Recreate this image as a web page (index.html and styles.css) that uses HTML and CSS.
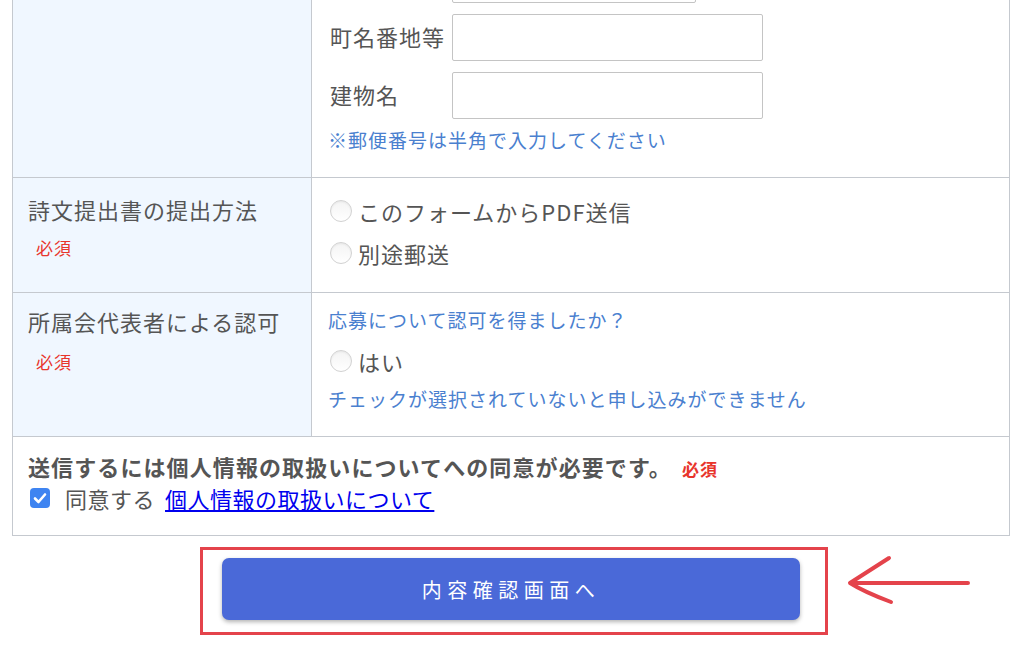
FILE: index.html
```html
<!DOCTYPE html>
<html lang="ja">
<head>
    <meta charset="UTF-8">
    <meta name="viewport" content="width=device-width, initial-scale=1.0">
    <title>応募フォーム</title>
    <link rel="stylesheet" href="styles.css">
</head>
<body>

<div class="page">
    <table class="form-table">
        <colgroup>
            <col class="col-label">
            <col>
        </colgroup>
        <tr>
            <th>
                <div class="label">住所</div>
                <span class="req">必須</span>
            </th>
            <td class="address">
                <div class="addr-row"><span class="addr-label">郵便番号</span><input type="text" class="input short"></div>
                <div class="addr-row"><span class="addr-label">都道府県</span><input type="text" class="input short"></div>
                <div class="addr-row"><span class="addr-label">市区町村</span><input type="text" class="input short"></div>
                <div class="addr-row"><span class="addr-label">町名番地等</span><input type="text" class="input"></div>
                <div class="addr-row"><span class="addr-label">建物名</span><input type="text" class="input"></div>
                <p class="note">※郵便番号は半角で入力してください</p>
            </td>
        </tr>
        <tr>
            <th>
                <div class="label">詩文提出書の提出方法</div>
                <span class="req">必須</span>
            </th>
            <td class="choices">
                <label class="radio-line"><input type="radio" name="method" class="radio">このフォームからPDF送信</label>
                <label class="radio-line"><input type="radio" name="method" class="radio">別途郵送</label>
            </td>
        </tr>
        <tr>
            <th class="th-tight">
                <div class="label">所属会代表者による認可</div>
                <span class="req">必須</span>
            </th>
            <td class="consent">
                <p class="note">応募について認可を得ましたか？</p>
                <label class="radio-line"><input type="radio" name="approval" class="radio">はい</label>
                <p class="note">チェックが選択されていないと申し込みができません</p>
            </td>
        </tr>
        <tr>
            <td colspan="2" class="privacy">
                <p class="privacy-title">送信するには個人情報の取扱いについてへの同意が必要です。<span class="req-bold">必須</span></p>
                <div class="agree">
                    <span class="checkbox">
                        <svg width="20" height="20" viewBox="0 0 20 20">
                            <path d="M5 10.5 L8.5 14 L15 6.5" fill="none" stroke="#fff" stroke-width="2.6" stroke-linecap="round" stroke-linejoin="round"/>
                        </svg>
                    </span>
                    <span class="agree-text">同意する</span>
                    <a href="#privacy" class="privacy-link">個人情報の取扱いについて</a>
                </div>
            </td>
        </tr>
    </table>

    <div class="submit-area">
        <div class="mark">
            <button class="submit-btn">内容確認画面へ</button>
            <svg class="arrow" width="128" height="56" viewBox="0 0 128 56">
                <path d="M5 28 L123 28 M44 3 C30 12 16 21 5 28 C16 35 30 41 46 47" fill="none" stroke="#e4434b" stroke-width="4" stroke-linecap="round" stroke-linejoin="round"/>
            </svg>
        </div>
    </div>
</div>

</body>
</html>
```

FILE: styles.css
```css
body {
    margin: 0;
    font-family: "Noto Sans CJK JP", "Noto Sans", sans-serif;
    color: #555;
    background-color: #fff;
}
.page {
    margin: -177px 14px 0 12px;
}
.form-table {
    width: 100%;
    border-collapse: collapse;
    table-layout: fixed;
    border: 1px solid #c5c9cf;
}
.col-label {
    width: 299px;
}
.form-table th,
.form-table td {
    border: 1px solid #c5c9cf;
    vertical-align: top;
    text-align: left;
}
.form-table th {
    background-color: #f0f7ff;
    font-weight: normal;
    padding: 15px 10px 10px 15px;
}
.form-table th.th-tight {
    padding-top: 12px;
}
.label {
    font-size: 22px;
    line-height: 32px;
    letter-spacing: 1px;
}
.req {
    display: inline-block;
    margin: 11px 0 0 8px;
    color: #e8352c;
    font-size: 17px;
    line-height: 24px;
    letter-spacing: 1px;
}
.th-tight .req {
    margin-top: 13px;
}
.address {
    padding: 16px 16px 25px 18px;
}
.addr-row {
    display: flex;
    align-items: center;
    margin-bottom: 11px;
}
.addr-row:last-of-type {
    margin-bottom: 0;
}
.addr-label {
    width: 122px;
    font-size: 22px;
    line-height: 30px;
    letter-spacing: 1px;
    white-space: nowrap;
    margin-top: -3px;
}
.input {
    width: 311px;
    height: 47px;
    box-sizing: border-box;
    border: 1px solid #c4c4c4;
    border-radius: 2px;
    margin: 0;
}
.input.short {
    width: 244px;
}
.note {
    margin: 9px 0 0 -2px;
    color: #4a80cf;
    font-size: 19px;
    line-height: 24px;
    letter-spacing: 1px;
}
.choices {
    padding: 12px 16px 18px 18px;
}
.radio-line {
    display: flex;
    align-items: center;
    height: 42px;
    font-size: 22px;
    letter-spacing: 1px;
}
.radio {
    appearance: none;
    -webkit-appearance: none;
    width: 22px;
    height: 22px;
    margin: 0 6px 0 0;
    border: 1px solid #d2d2d2;
    border-radius: 50%;
    background: linear-gradient(#f4f4f4, #fff);
    box-shadow: inset 0 1px 2px rgba(0, 0, 0, 0.06);
    flex-shrink: 0;
}
.consent {
    padding: 15px 16px 25px 18px;
}
.consent .note:first-child {
    margin-top: 0;
}
.consent .radio-line {
    margin-top: 8px;
}
.consent .radio-line + .note {
    margin-top: 5px;
}
.privacy {
    padding: 14px 15px 22px 15px;
}
.privacy-title {
    margin: 0;
    font-size: 22px;
    line-height: 30px;
    font-weight: bold;
    letter-spacing: 1.1px;
}
.req-bold {
    margin-left: 10px;
    color: #e8352c;
    font-size: 17px;
    letter-spacing: 1px;
}
.agree {
    display: flex;
    align-items: center;
    height: 30px;
    margin-top: -1px;
    font-size: 22px;
    letter-spacing: 0.5px;
}
.checkbox {
    display: flex;
    width: 20px;
    height: 20px;
    margin: 0 15px 0 2px;
    border-radius: 4px;
    background-color: #3e84f1;
}
.agree-text {
    margin-right: 10px;
}
.privacy-link {
    color: #0000ee;
}
.submit-area {
    display: flex;
    justify-content: center;
    padding-left: 6px;
    margin-top: 11px;
}
.mark {
    position: relative;
    padding: 8px 25px 12px 19px;
    border: 3px solid #e4434b;
}
.submit-btn {
    display: block;
    width: 578px;
    height: 62px;
    border: none;
    border-radius: 7px;
    background-color: #4a69d8;
    color: #fff;
    font-family: inherit;
    font-size: 20px;
    letter-spacing: 5.5px;
    box-shadow: 0 2px 4px rgba(0, 0, 0, 0.3);
    cursor: pointer;
}
.arrow {
    position: absolute;
    left: calc(100% + 20px);
    top: 5px;
}
```
